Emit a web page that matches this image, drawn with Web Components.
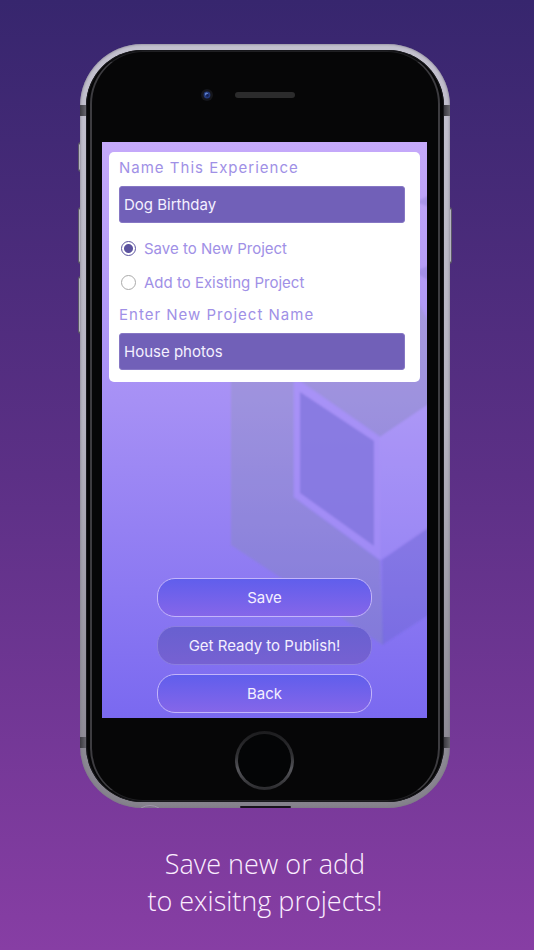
<!DOCTYPE html>
<html lang="en">
<head>
<meta charset="UTF-8">
<meta name="viewport" content="width=device-width, initial-scale=1">
<title>Save new or add to projects</title>
<style>
  body {
    margin: 0;
    font-family: Inter, "Open Sans", sans-serif;
  }
</style>
</head>
<body>
<promo-page>
  <phone-frame>
    <app-screen>
      <form-card>
        <text-field label="Name This Experience" value="Dog Birthday"></text-field>
        <radio-choice name="target" options="Save to New Project|Add to Existing Project"></radio-choice>
        <text-field label="Enter New Project Name" value="House photos"></text-field>
      </form-card>
      <pill-button slot="actions">Save</pill-button>
      <pill-button slot="actions" muted>Get Ready to Publish!</pill-button>
      <pill-button slot="actions">Back</pill-button>
    </app-screen>
  </phone-frame>
  <span slot="caption">Save new or add<br>to exisitng projects!</span>
</promo-page>

<script>
class PromoPage extends HTMLElement {
  constructor() {
    super();
    this.attachShadow({ mode: "open" });
    this.shadowRoot.innerHTML = /*html*/`
      <style>
        :host {
          display: block;
          box-sizing: border-box;
          min-height: 100vh;
          padding: 44px 84px 24px 80px;
          background: linear-gradient(#37266e, #5c3086 50%, #873ea4);
        }
        main {
          max-width: 480px;
          margin: 0 auto;
        }
        p {
          margin: 37px 0 0;
          color: #fbeeff;
          font: 300 27px/37px "Open Sans", "Noto Sans", sans-serif;
          text-align: center;
        }
      </style>
      <main>
        <slot></slot>
        <p><slot name="caption"></slot></p>
      </main>
    `;
  }
}
customElements.define("promo-page", PromoPage);

class PhoneFrame extends HTMLElement {
  constructor() {
    super();
    this.attachShadow({ mode: "open" });

    // the side keys, antenna bands and ports lie over the metal edge
    this.shadowRoot.innerHTML = /*html*/`
      <style>
        :host {
          display: block;
          position: relative;
          z-index: 0;
        }
        .metal {
          padding: 6px;
          border-radius: 62px;
          background: linear-gradient(#c3c1ce, #b5b3c0 50%, #85828c);
          box-shadow: inset 0 0 2px 1px #77748280;
        }
        .glass {
          position: relative;
          padding: 0 17px 0 16px;
          border-radius: 56px;
          background: #060607;
          box-shadow: inset 0 0 0 1px #18181c;
        }
        .glass::before {
          content: "";
          position: absolute;
          inset: 1px 4px;
          border: 1px solid #4b4a4d;
          border-width: 1px 2px;
          border-color: #1f1f22 #3d3c40;
          border-radius: 53px;
        }
        .top {
          display: grid;
          grid-template-columns: 1fr 60px 1fr;
          gap: 22px;
          align-items: center;
          box-sizing: border-box;
          height: 92px;
          padding-bottom: 2px;
        }
        .camera {
          justify-self: end;
          width: 12px;
          height: 12px;
        }
        .speaker {
          height: 6px;
          border-radius: 3px;
          background: #2b2b2c;
        }
        .bottom {
          display: flex;
          justify-content: center;
          align-items: center;
          height: 84px;
        }
        .home {
          position: relative;
          box-sizing: border-box;
          width: 59px;
          height: 59px;
          padding: 3px;
          border: 0;
          border-radius: 50%;
          background: linear-gradient(#1c1c1e, #303033 40%, #55555a 65%, #2a2a2d);
        }
        .home::before {
          content: "";
          display: block;
          height: 100%;
          border-radius: 50%;
          background: #040506;
        }
        .key {
          position: absolute;
          z-index: -1;
          width: 6px;
          box-sizing: border-box;
          border: 1px solid #5c5968;
          border-width: 2px 1px;
          border-radius: 3px;
          background: #b7b5c2;
        }
        .left { left: -2px; }
        .right { right: -2px; }
        .band {
          position: absolute;
          width: 6px;
          height: 11px;
          background: linear-gradient(90deg, #3b3a40, #66656c);
        }
        .port {
          position: absolute;
          bottom: 0;
          left: 160px;
          width: 51px;
          height: 2px;
          border-radius: 2px;
          background: #18151c;
        }
        .jack {
          position: absolute;
          bottom: 0;
          left: 60px;
          width: 20px;
          height: 3px;
        }
      </style>
      <i class="key left" style="top: 98px; height: 30px"></i>
      <i class="key left" style="top: 163px; height: 57px"></i>
      <i class="key left" style="top: 232px; height: 58px"></i>
      <i class="key right" style="top: 163px; height: 57px"></i>
      <div class="metal">
        <div class="glass">
          <div class="top">
            <svg class="camera" viewBox="0 0 12 12" aria-hidden="true">
              <circle cx="6" cy="6" r="6" fill="#15161b"/>
              <circle cx="6" cy="6" r="3.4" fill="#243a7c"/>
              <circle cx="5.5" cy="5" r="1.6" fill="#6284cf"/>
              <circle cx="6.4" cy="6.4" r="1.3" fill="#14204f"/>
            </svg>
            <div class="speaker"></div>
          </div>
          <slot></slot>
          <div class="bottom"><button class="home" type="button" aria-label="Home"></button></div>
        </div>
      </div>
      <i class="band" style="top: 61px; left: 0"></i>
      <i class="band" style="top: 61px; right: 0"></i>
      <i class="band" style="bottom: 60px; left: 0"></i>
      <i class="band" style="bottom: 60px; right: 0"></i>
      <i class="port"></i>
      <svg class="jack" viewBox="0 0 20 3" aria-hidden="true">
        <path d="M1 3Q10-2 19 3" fill="#7d7489" stroke="#aaa0b4" stroke-width=".7"/>
      </svg>
    `;
  }
}
customElements.define("phone-frame", PhoneFrame);

class AppScreen extends HTMLElement {
  constructor() {
    super();
    this.attachShadow({ mode: "open" });
    this.shadowRoot.innerHTML = /*html*/`
      <style>
        :host {
          display: flex;
          flex-direction: column;
          justify-content: space-between;
          position: relative;
          z-index: 0;
          box-sizing: border-box;
          aspect-ratio: 325 / 576;
          padding: 10px 7px 5px;
          background: linear-gradient(#c5a9fa, #a690f5 45%, #7a69f0);
        }
        .cube {
          position: absolute;
          inset: 0;
          z-index: -1;
          width: 100%;
          height: 100%;
        }
        .actions {
          display: grid;
          gap: 9px;
          width: 69%;
          margin: 0 auto;
        }
      </style>
      <svg class="cube" viewBox="0 0 325 576" preserveAspectRatio="xMaxYMin slice" aria-hidden="true">
        <defs>
          <filter id="soft" x="-5%" y="-5%" width="110%" height="110%">
            <feGaussianBlur stdDeviation="1.2"/>
          </filter>
        </defs>
        <g filter="url(#soft)">
          <path d="M129 180L279 90L340 205V253L278 295L192 235V355L278 418L281 503L129 403Z" fill="rgb(120,150,130)" fill-opacity=".2"/>
          <path d="M192 235L278 295V418L192 355Z" fill="#a892f7" fill-opacity=".65"/>
          <path d="M198 250L272 299V404L198 351Z" fill="#766dd6" fill-opacity=".6"/>
          <path d="M278 295L340 253V376L278 418Z" fill="#d8c8ff" fill-opacity=".14"/>
          <path d="M280 418L340 376V464L280 503Z" fill="rgb(80,90,170)" fill-opacity=".2"/>
          <path d="M314 60L330 52V66ZM312 130L330 122V140Z" fill="#7a70c8" fill-opacity=".3"/>
        </g>
      </svg>
      <slot></slot>
      <div class="actions"><slot name="actions"></slot></div>
    `;
  }
}
customElements.define("app-screen", AppScreen);

class FormCard extends HTMLElement {
  constructor() {
    super();
    this.attachShadow({ mode: "open" });
    this.shadowRoot.innerHTML = /*html*/`
      <style>
        :host {
          display: block;
          padding: 0 15px 12px 10px;
          border-radius: 5px;
          background: #fff;
        }
      </style>
      <slot></slot>
    `;
  }
}
customElements.define("form-card", FormCard);

class TextField extends HTMLElement {
  constructor() {
    super();
    this.attachShadow({ mode: "open" });
    this.shadowRoot.innerHTML = /*html*/`
      <style>
        :host { display: block; }
        label {
          display: block;
          color: #a090e6;
          font-size: 15px;
          line-height: 32px;
          letter-spacing: 1px;
        }
        input {
          display: block;
          box-sizing: border-box;
          width: 100%;
          height: 37px;
          margin-top: 2px;
          padding: 0 4px;
          border: 1px solid #8677c4;
          border-radius: 3px;
          background: #7160b8;
          color: #f4f0ff;
          font: inherit;
          font-size: 15px;
        }
      </style>
      <label for="field"></label>
      <input id="field" type="text">
    `;
  }

  connectedCallback() {
    this.shadowRoot.querySelector("label").textContent = this.getAttribute("label");
    this.shadowRoot.querySelector("input").value = this.getAttribute("value") || "";
  }
}
customElements.define("text-field", TextField);

class RadioChoice extends HTMLElement {
  constructor() {
    super();
    this.attachShadow({ mode: "open" });
    this.shadowRoot.innerHTML = /*html*/`
      <style>
        :host {
          display: block;
          margin-top: 8px;
        }
        label {
          display: flex;
          align-items: center;
          gap: 8px;
          height: 34px;
          padding-left: 2px;
          color: #a090e6;
          font-size: 15px;
        }
        input {
          appearance: none;
          box-sizing: border-box;
          width: 15px;
          height: 15px;
          margin: 0;
          border: 1px solid #aaa;
          border-radius: 50%;
          background: #fff;
        }
        input:checked {
          border-color: #5c539f;
          background: radial-gradient(circle, #5c539f 4px, #fff 5px);
        }
      </style>
      <div role="radiogroup" aria-label="Project"></div>
    `;
  }

  connectedCallback() {
    const group = this.shadowRoot.querySelector("div");
    group.replaceChildren();
    // first option is the default
    this.getAttribute("options").split("|").forEach((text, i) => {
      const label = document.createElement("label");
      const input = document.createElement("input");
      input.type = "radio";
      input.name = this.getAttribute("name");
      input.checked = i === 0;
      label.append(input, text);
      group.append(label);
    });
  }
}
customElements.define("radio-choice", RadioChoice);

class PillButton extends HTMLElement {
  constructor() {
    super();
    this.attachShadow({ mode: "open" });
    this.shadowRoot.innerHTML = /*html*/`
      <style>
        :host { display: block; }
        button {
          display: block;
          width: 100%;
          height: 39px;
          padding: 0;
          border: 1px solid #c3b5fa;
          border-radius: 18px;
          background: linear-gradient(#5f5eec, #8666e9) border-box;
          color: #f3efff;
          font: inherit;
          font-size: 15px;
          cursor: pointer;
        }
        :host([muted]) button {
          border-color: #8b7ee0;
          background: linear-gradient(#6860d0, #7661d2);
        }
      </style>
      <button type="button"><slot></slot></button>
    `;
  }
}
customElements.define("pill-button", PillButton);
</script>
</body>
</html>
